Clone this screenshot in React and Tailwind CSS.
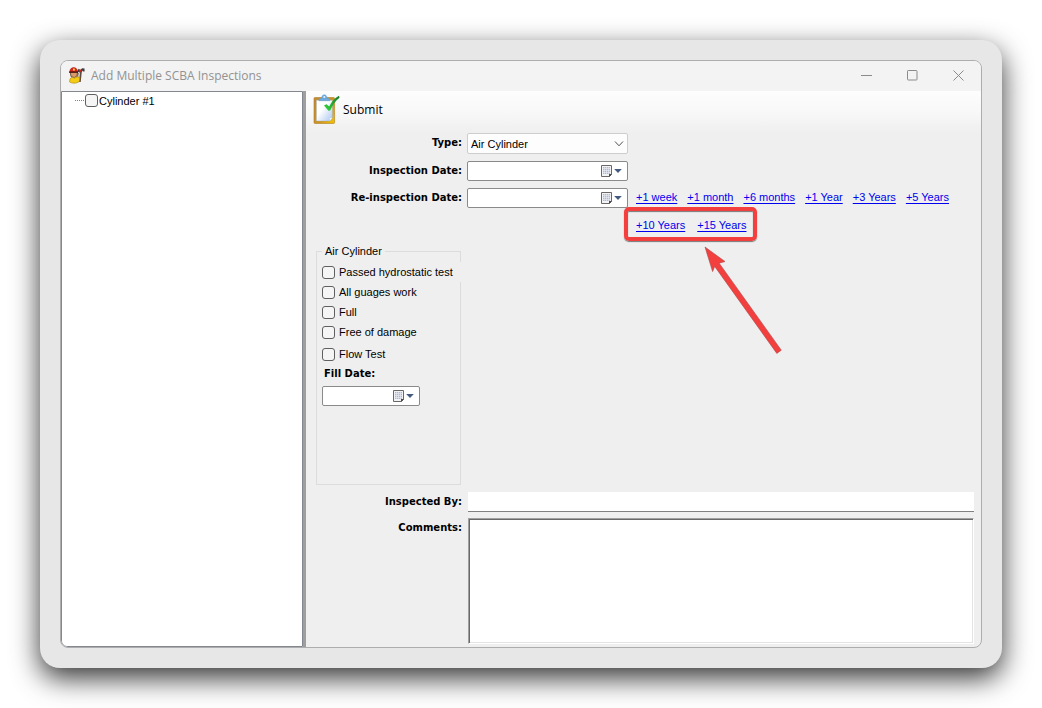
import React from 'react';

function FirefighterIcon() {
  return (
    <svg width="17" height="17" viewBox="0 0 17 17" aria-hidden="true">
      <path d="M9.5 4.2 L10.5 1.8 L12.5 3 L14 1.2 L16.5 1.6 L16.6 4.6 L15.2 4.6 L14.8 3.4 L13.8 5 L11 5.5 Z" fill="#3d3d3d" />
      <path d="M13 4 L11.8 15" stroke="#5d4a40" strokeWidth="1.8" />
      <path d="M10.4 6 L9.6 10" stroke="#8b7b70" strokeWidth="1.2" />
      <circle cx="12.2" cy="3.8" r="1.2" fill="#d9261c" />
      <path d="M2.2 5 H9.6 L9 9 L6.5 10.6 L3 9.6 Z" fill="#d99a6c" stroke="#5b3a20" strokeWidth=".8" />
      <path d="M1.8 5 C2 1.2 4.3 .6 5.8 .6 C7.6 .6 9.4 2 9.8 5 Z" fill="#e0261b" stroke="#8d120c" strokeWidth=".5" />
      <path d="M1 5.2 H10" stroke="#3a1512" strokeWidth="1.2" />
      <rect x="5" y="1.6" width="1.8" height="2" fill="#ffd34d" />
      <path d="M2 12 C3 9.8 5 10.3 6.5 11 C8.5 9.4 11 9.5 11.8 11 L11.4 14.5 C8 16.8 4 16.5 1.6 15 Z" fill="#f4cb16" stroke="#a78106" strokeWidth=".6" />
    </svg>
  );
}

function ClipboardIcon() {
  return (
    <svg width="27" height="31" viewBox="0 0 27 31" aria-hidden="true">
      <defs>
        <linearGradient id="board" x1="0" y1="0" x2="1" y2="1">
          <stop offset="0" stopColor="#c08a3a" />
          <stop offset=".6" stopColor="#cf9420" />
          <stop offset="1" stopColor="#f2c500" />
        </linearGradient>
        <linearGradient id="paper" x1="0" y1="0" x2="1" y2="1">
          <stop offset=".4" stopColor="#ffffff" />
          <stop offset="1" stopColor="#a9c6f0" />
        </linearGradient>
        <linearGradient id="tick" x1="0" y1="1" x2="1" y2="0">
          <stop offset="0" stopColor="#35d83d" />
          <stop offset="1" stopColor="#167a2c" />
        </linearGradient>
      </defs>
      <rect x="1" y="3.5" width="20.6" height="26" rx="1" fill="url(#board)" stroke="#b07d22" strokeWidth=".6" />
      <path d="M3.4 6.2 H19.4 V24 L16.8 27 H3.4 Z" fill="url(#paper)" stroke="#9aa9bd" strokeWidth=".4" />
      <path d="M19.4 24 L16.8 27 V24 Z" fill="#e8f1ff" />
      <path d="M6 6.8 V4.5 H8.7 C8.7 2 9.6 .8 11.3 .8 C13 .8 14 2 14 4.5 H16.8 V6.8 Z" fill="#6cabe0" stroke="#5e9acf" strokeWidth=".4" />
      <circle cx="11.3" cy="3" r="1" fill="#e3f1fb" />
      <path d="M11 11.4 L13.4 10.2 L16.2 12.6 C18.5 7.8 21.5 4 26 1.8 L26.5 3.8 C22.4 7 19.6 11.2 17.2 16.6 L15.4 16.8 Z" fill="url(#tick)" />
    </svg>
  );
}

function CalendarButton({ label }) {
  return (
    <button type="button" aria-label={label} className="flex h-full shrink-0 items-center pr-[5px]">
      <svg width="21" height="14" viewBox="0 0 21 14" aria-hidden="true">
        <path d="M.5 1.5 H10.5 V10.5 L8.5 12.5 H.5 Z" fill="#f2f3f6" stroke="#6e6565" />
        <path d="M8 13 V10 H11 Z" fill="#4d4747" />
        <path d="M2 3 H9 V10 H2 Z" fill="#b1bac9" />
        <path d="M2 4.5 H9 M2 6.5 H9 M2 8.5 H9 M3.5 3 V10 M5.5 3 V10 M7.5 3 V10" stroke="#e6eaf1" strokeWidth=".7" />
        <path d="M13.2 5 H20.8 L17 9 Z" fill="#43597f" />
      </svg>
    </button>
  );
}

function DateField({ id, label, className }) {
  return (
    <div className={`flex h-5 items-center rounded-[2px] border border-[#8a8a8a] bg-white ${className}`}>
      <input id={id} type="text" className="h-full w-full min-w-0 px-1 text-[11px] outline-none" />
      <CalendarButton label={label} />
    </div>
  );
}

const box = 'm-0 h-[13px] w-[13px] shrink-0 appearance-none rounded-[3px] border border-[#5f5f5f] bg-[#f5f5f5]';
const boldLabel = "font-['DejaVu_Sans',sans-serif] text-[10px] font-bold leading-5 text-black";
const formLabel = `${boldLabel} block text-right`;
const linkClass = 'whitespace-nowrap text-[#0000f0] underline underline-offset-2';

function QuickLink({ children }) {
  return <a href="#" className={linkClass}>{children}</a>;
}

function CheckRow({ label, className = '' }) {
  return (
    <label className={`flex h-5 items-center gap-1 whitespace-nowrap ${className}`}>
      <input type="checkbox" className={box} />
      {label}
    </label>
  );
}

function TitleBar() {
  const button = 'flex h-full w-[46px] items-center justify-center';
  return (
    <header className="flex h-[30px] shrink-0 items-center bg-[#f3f3f3] pb-px pl-[7px]">
      <FirefighterIcon />
      <h1 className="ml-1.5 grow font-['Open_Sans',sans-serif] text-[12px] leading-4 text-[#929292]">
        Add Multiple SCBA Inspections
      </h1>
      <button type="button" aria-label="Minimize" className={button}>
        <svg width="11" height="11" viewBox="0 0 11 11"><path d="M0 5.5 H11" stroke="#8b8b8b" /></svg>
      </button>
      <button type="button" aria-label="Maximize" className={button}>
        <svg width="11" height="11" viewBox="0 0 11 11"><rect x=".5" y=".5" width="9.5" height="9.5" rx=".7" fill="none" stroke="#8b8b8b" /></svg>
      </button>
      <button type="button" aria-label="Close" className={button}>
        <svg width="11" height="11" viewBox="0 0 11 11"><path d="M.5 .5 L10.5 10.5 M10.5 .5 L.5 10.5" stroke="#8b8b8b" /></svg>
      </button>
    </header>
  );
}

export default function App() {
  return (
    <div className="flex min-h-screen bg-white p-10 font-['Liberation_Sans',Arial,sans-serif] text-[11px] leading-4 text-black">
      <div className="flex grow rounded-[20px] bg-[#e7e7e7] p-5 shadow-[0_10px_28px_rgba(0,0,0,0.8)]">
        <div className="flex grow flex-col overflow-hidden rounded-lg border border-[#adadad] bg-[#efefef]">
          <TitleBar />
          <div className="flex grow">
            <aside className="w-[242px] shrink-0 rounded-bl-md border border-[#828790] bg-white pl-[13px]">
              <label className="flex h-[17px] items-center">
                <span className="mr-px w-[9px] border-t border-dotted border-[#808080]" />
                <input type="checkbox" className={box} />
                <span className="ml-px">Cylinder #1</span>
              </label>
            </aside>
            <div className="w-[3px] shrink-0 bg-[#9f9f9f]" />
            <main className="flex min-w-0 grow flex-col">
              <div className="flex h-[42px] shrink-0 items-start bg-linear-to-b from-[#fdfdfd] via-[#f8f8f8] to-[#efefef] pl-[7px] pt-[3px]">
                <button type="button" className="flex items-center gap-[3px] font-['Open_Sans',sans-serif] text-[12px] leading-4">
                  <ClipboardIcon />
                  Submit
                </button>
              </div>
              <form className="flex grow flex-col pb-[3px] pr-[7px]">
                <div className="grid grid-cols-[156px_1fr] gap-x-[5px] gap-y-[7px]">
                  <label htmlFor="type" className={formLabel}>Type:</label>
                  <div className="relative w-[161px]">
                    <select id="type" className="block h-[21px] w-full appearance-none rounded-[2px] border border-[#cdcdcd] bg-[#fdfdfd] px-[3px] text-[11px]">
                      <option>Air Cylinder</option>
                    </select>
                    <svg className="pointer-events-none absolute right-1 top-[7px]" width="10" height="8" viewBox="0 0 10 8">
                      <path d="M1 1.5 L5 5.8 L9 1.5" fill="none" stroke="#505050" />
                    </svg>
                  </div>

                  <label htmlFor="inspection-date" className={formLabel}>Inspection Date:</label>
                  <DateField id="inspection-date" label="Choose inspection date" className="w-[161px]" />

                  <label htmlFor="reinspection-date" className={formLabel}>Re-inspection Date:</label>
                  <div className="flex items-start gap-2">
                    <DateField id="reinspection-date" label="Choose re-inspection date" className="w-[161px] shrink-0" />
                    <div className="flex flex-wrap gap-x-2.5 gap-y-[9px] leading-[18px]">
                      <QuickLink>+1 week</QuickLink>
                      <QuickLink>+1 month</QuickLink>
                      <QuickLink>+6 months</QuickLink>
                      <QuickLink>+1 Year</QuickLink>
                      <QuickLink>+3 Years</QuickLink>
                      <QuickLink>+5 Years</QuickLink>
                      <div className="relative flex gap-3 leading-5">
                        <QuickLink>+10 Years</QuickLink>
                        <QuickLink>+15 Years</QuickLink>
                        <div className="pointer-events-none absolute -bottom-1.5 -left-3 -right-2.5 -top-2 rounded-[5px] border-4 border-[#f43f3f] shadow-[0_1px_1px_#00000080,inset_0_1px_1px_#00000080]" />
                        <svg className="pointer-events-none absolute left-[67px] top-[31px]" width="82" height="110" viewBox="0 0 82 110">
                          <path d="M2 1 L22 15.5 L16.2 17.2 L78.3 104.2 L73.8 107.4 L11.7 20.4 L9.6 25.6 Z" fill="#f43f3f" stroke="#a84b4b" strokeWidth=".6" />
                        </svg>
                      </div>
                    </div>
                  </div>
                </div>

                <fieldset className="ml-2.5 mt-2 h-[242px] w-[145px] min-w-0 border border-[#dcdcdc] px-[5px]">
                  <legend className="px-[3px]">Air Cylinder</legend>
                  <div className="mt-[3px]">
                    <CheckRow label="Passed hydrostatic test" className="w-[140px] bg-[#efefef]" />
                    <CheckRow label="All guages work" />
                    <CheckRow label="Full" />
                    <CheckRow label="Free of damage" />
                    <CheckRow label="Flow Test" className="mt-0.5" />
                    <label htmlFor="fill-date" className={`${boldLabel} block pl-0.5`}>Fill Date:</label>
                    <DateField id="fill-date" label="Choose fill date" className="mt-0.5 w-[98px]" />
                  </div>
                </fieldset>

                <div className="mt-[7px] grid grow grid-cols-[156px_1fr] grid-rows-[20px_1fr] gap-x-1.5 gap-y-1.5">
                  <label htmlFor="inspected-by" className={formLabel}>Inspected By:</label>
                  <input id="inspected-by" type="text" className="h-5 w-full border-b border-[#808080] bg-white px-1 outline-none" />
                  <label htmlFor="comments" className={formLabel}>Comments:</label>
                  <textarea id="comments" className="block h-full w-full resize-none border border-b-white border-l-[#a0a0a0] border-r-white border-t-[#a0a0a0] bg-white p-1 shadow-[inset_1px_1px_0_#696969,inset_-1px_-1px_0_#e3e3e3] outline-none" />
                </div>
              </form>
            </main>
          </div>
        </div>
      </div>
    </div>
  );
}
